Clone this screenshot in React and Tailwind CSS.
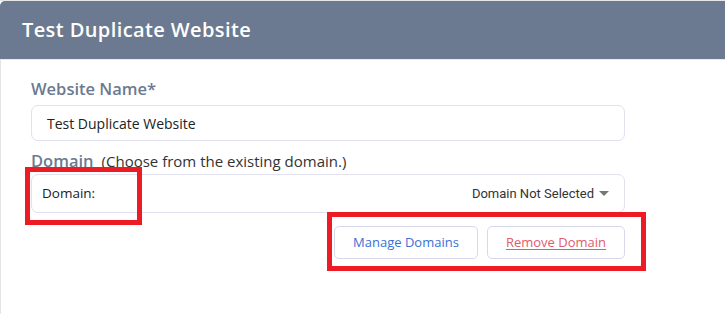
import React from 'react';

const font = { fontFamily: '"Open Sans", "Noto Sans", sans-serif' };

export default function App() {
    return (
        <div className="relative w-[725px] h-[314px] bg-white overflow-hidden" style={font}>
            <div className="h-px bg-[#e6e6e6]" />
            <div className="h-[59px] bg-[#6b7a90] rounded-tl-[5px] flex items-center pl-[22px] border-b border-[#e8eaee]">
                <h1 className="text-[20px] font-semibold text-white tracking-[0.4px]">Test Duplicate Website</h1>
            </div>

            <div className="border-l border-[#e4e4e4] h-[254px] pl-[30px] pr-[100px] pt-[17px]">
                <label className="block text-[16.5px] leading-[24px] font-semibold text-[#6b7a90]">Website Name*</label>
                <div className="mt-[4px] h-[36px] rounded-[7px] border border-[#e1e1ef] flex items-center pl-[15px] text-[14px] text-[#222]">
                    Test Duplicate Website
                </div>

                <div className="mt-[8px] flex items-baseline gap-[8px]">
                    <span className="text-[16.5px] leading-[24px] font-semibold text-[#6b7a90]">Domain</span>
                    <span className="text-[15px] text-[#333]">(Choose from the existing domain.)</span>
                </div>
                <div className="mt-[1px] h-[39px] rounded-[7px] border border-[#e1e1ef] flex items-center justify-between pl-[10px] pr-[15px]">
                    <span className="text-[13.5px] text-[#222]">Domain:</span>
                    <span className="flex items-center gap-[5px] text-[13px] text-[#333]" style={{ fontFamily: 'Roboto, sans-serif' }}>
                        Domain Not Selected
                        <svg width="10" height="6" viewBox="0 0 10 6"><path d="M0 0h10L5 5z" fill="#777" /></svg>
                    </span>
                </div>

                <div className="mt-[13px] flex justify-end gap-[9px]">
                    <button type="button" className="w-[144px] h-[33px] rounded-[5px] border border-[#d9d9ec] text-[13px] text-[#3b6fd6]">
                        Manage Domains
                    </button>
                    <button type="button" className="w-[138px] h-[33px] rounded-[5px] border border-[#d9d9ec] text-[13px] text-[#e35a6b] underline underline-offset-2">
                        Remove Domain
                    </button>
                </div>
            </div>

            {/* annotation boxes */}
            <div className="absolute left-[25px] top-[167px] w-[117px] h-[58px] border-[5px] border-[#ed1c24]" />
            <div className="absolute left-[327px] top-[212px] w-[319px] h-[59px] border-[5px] border-[#ed1c24]" />
        </div>
    );
}
